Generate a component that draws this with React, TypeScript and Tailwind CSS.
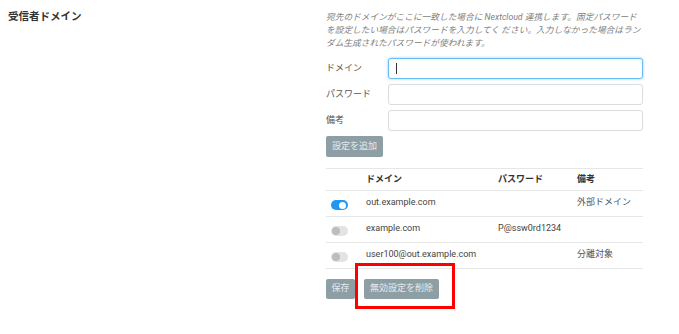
const FONT = { fontFamily: 'Roboto, "Noto Sans CJK JP", sans-serif' };

const ROWS = [
  { on: true, domain: "out.example.com", password: "", note: "外部ドメイン" },
  { on: false, domain: "example.com", password: "P@ssw0rd1234", note: "" },
  { on: false, domain: "user100@out.example.com", password: "", note: "分離対象" },
];

function Toggle({ on }: { on: boolean }) {
  return on ? (
    <div className="w-[17px] h-[10px] rounded-full bg-[#2196f3] flex items-center justify-end pr-[2px]">
      <div className="w-[7px] h-[7px] rounded-full bg-white" />
    </div>
  ) : (
    <div className="w-[17px] h-[10px] rounded-full bg-[#e3e3e3] flex items-center pl-[1px]">
      <div className="w-[8px] h-[8px] rounded-full bg-[#bdbdbd]" />
    </div>
  );
}

function Field({ label, focused }: { label: string; focused?: boolean }) {
  return (
    <div className="flex items-center h-[21px]">
      <div className="w-[62px] text-[9px] text-[#555]">{label}</div>
      <div
        className={`w-[255px] h-[21px] rounded-[3px] bg-white flex items-center pl-[7px] ${
          focused
            ? "border border-[#66bdf5] shadow-[0_0_3px_rgba(80,170,240,0.6)]"
            : "border border-[#dcdcdc]"
        }`}
      >
        {focused && <div className="w-px h-[11px] bg-[#333]" />}
      </div>
    </div>
  );
}

export default function App() {
  return (
    <div className="w-[679px] h-[334px] bg-white flex" style={FONT}>
      <div className="w-[326px] pl-[8px] pt-[10px]">
        <div className="text-[10.5px] font-bold text-[#333] leading-[14px]">受信者ドメイン</div>
      </div>

      <div className="w-[317px] pt-[11px]">
        <p className="text-[8.7px] italic text-[#808080] leading-[13px] whitespace-nowrap">
          宛先のドメインがここに一致した場合に Nextcloud 連携します。固定パスワード
          <br />
          を設定したい場合はパスワードを入力してく ださい。入力しなかった場合はラン
          <br />
          ダム生成されたパスワードが使われます。
        </p>

        <div className="mt-[8px] flex flex-col gap-[5px]">
          <Field label="ドメイン" focused />
          <Field label="パスワード" />
          <Field label="備考" />
        </div>

        <button className="mt-[5px] h-[21px] px-[6px] rounded-[2px] bg-[#8e9ea5] text-[9px] text-[#e4eaec]">
          設定を追加
        </button>

        <div className="mt-[11px] border-t border-[#e6e6e6]">
          <div className="flex items-center h-[22px] border-b border-[#e6e6e6] text-[9px] font-bold text-[#333]">
            <div className="w-[40px]" />
            <div className="w-[132px]">ドメイン</div>
            <div className="w-[79px]">パスワード</div>
            <div className="flex-1">備考</div>
          </div>
          {ROWS.map((r) => (
            <div
              key={r.domain}
              className="flex items-start h-[26px] border-b border-[#e6e6e6] text-[9px] text-[#444]"
            >
              <div className="w-[40px] pl-[5px] pt-[9px]">
                <Toggle on={r.on} />
              </div>
              <div className="w-[132px] pt-[5px]">{r.domain}</div>
              <div className="w-[79px] pt-[5px]">{r.password}</div>
              <div className="flex-1 pt-[5px] text-[#555]">{r.note}</div>
            </div>
          ))}
        </div>

        <div className="relative mt-[10px] flex gap-[9px]">
          <button className="h-[20px] w-[29px] rounded-[2px] bg-[#8e9ea5] text-[9px] text-[#e4eaec]">
            保存
          </button>
          <button className="h-[20px] w-[75px] rounded-[2px] bg-[#8e9ea5] text-[9px] text-[#e4eaec]">
            無効設定を削除
          </button>
          <div className="absolute left-[29px] top-[-16px] w-[100px] h-[46px] border-[3px] border-[#ff0000]" />
        </div>
      </div>
    </div>
  );
}
